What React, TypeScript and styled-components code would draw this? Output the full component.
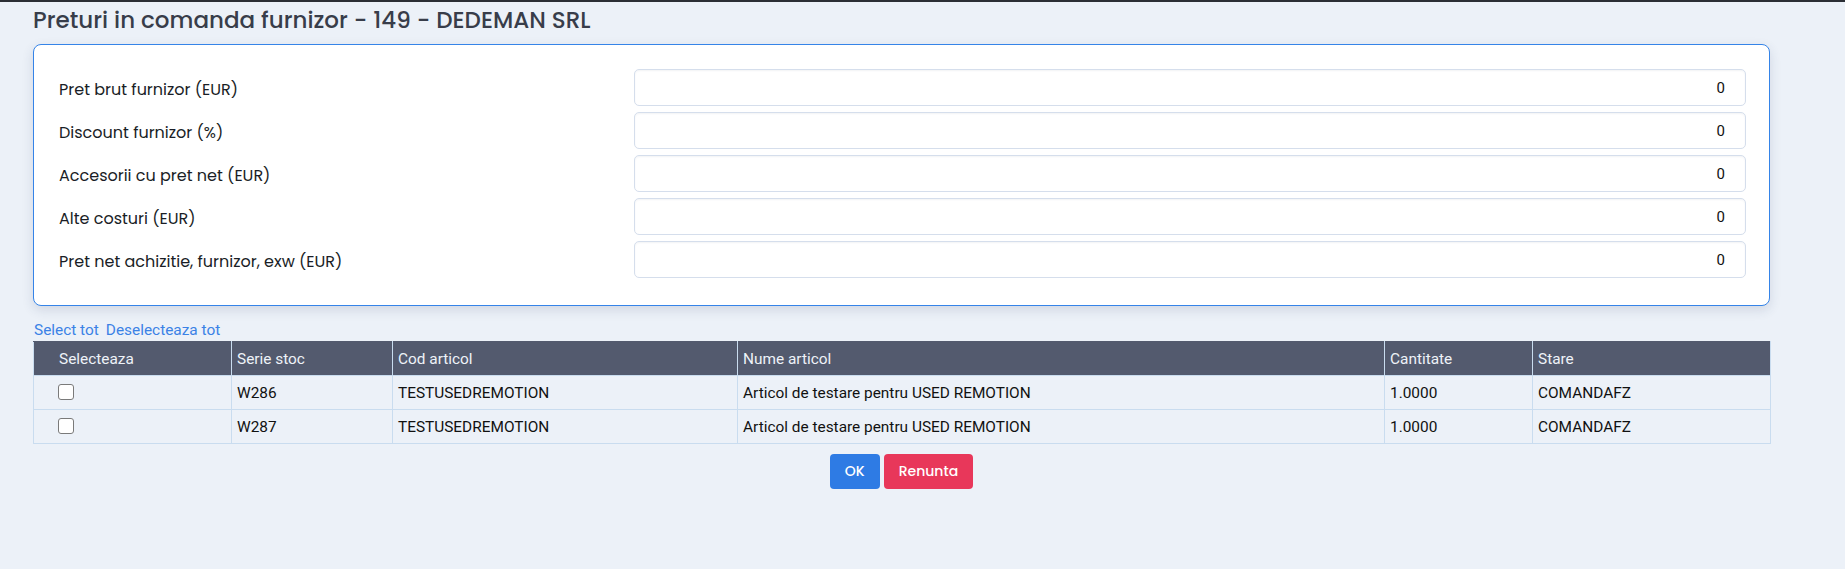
import React from "react";
import styled, { createGlobalStyle } from "styled-components";

const GlobalStyle = createGlobalStyle`
  html, body {
    margin: 0;
    padding: 0;
    background: #ecf1f8;
  }
  body {
    font-family: Roboto, "Liberation Sans", sans-serif;
  }
`;

const Page = styled.div`
  min-height: 567px;
  border-top: 2px solid #2b2e35;
  padding: 0 75px 0 33px;
`;

const Title = styled.h1`
  margin: 0;
  height: 42px;
  padding-top: 3px;
  box-sizing: border-box;
  font-family: Poppins, "Open Sans", sans-serif;
  font-weight: 500;
  font-size: 23px;
  line-height: 30px;
  color: #383d4a;
`;

const Card = styled.section`
  background: #ffffff;
  border: 1px solid #3584e8;
  border-radius: 8px;
  box-shadow: 0 4px 12px rgba(40, 60, 100, 0.14);
  padding: 24px 23px 27px 24px;
  display: grid;
  grid-template-columns: 576px 1fr;
  grid-auto-rows: 37px;
  row-gap: 6px;
  align-items: center;
`;

const Label = styled.label`
  font-family: Poppins, "Open Sans", sans-serif;
  font-size: 16px;
  color: #1a1e26;
  padding-left: 1px;
  padding-top: 3px;
`;

const NumberInput = styled.input`
  box-sizing: border-box;
  height: 37px;
  width: 100%;
  border: 1px solid #d5deec;
  border-radius: 5px;
  box-shadow: inset 0 1px 2px rgba(30, 50, 90, 0.06);
  padding: 0 20px 0 12px;
  text-align: right;
  font-family: Roboto, "Liberation Sans", sans-serif;
  font-size: 15px;
  color: #111;
  background: #fff;
  outline: none;
`;

const Links = styled.div`
  margin-top: 13px;
  display: flex;
  gap: 7px;
  font-size: 15.4px;
  line-height: 22px;
  padding-left: 1px;
`;

const LinkText = styled.a`
  color: #3b82e6;
  text-decoration: none;
  cursor: pointer;
`;

const Table = styled.table`
  width: 100%;
  border-collapse: collapse;
  table-layout: fixed;
  font-size: 15.4px;
  border: 1px solid #c9dcef;
`;

const HeadCell = styled.th<{ $first?: boolean }>`
  background: #535a6e;
  color: #eef2f8;
  font-weight: 400;
  text-align: left;
  height: 33px;
  padding: 0 0 0 ${(p) => (p.$first ? "25px" : "5px")};
  border: 1px solid #c9dcef;
  border-top-color: #535a6e;
`;

const Cell = styled.td<{ $first?: boolean }>`
  background: #ecf1f8;
  color: #111;
  height: 33px;
  padding: 0 0 0 ${(p) => (p.$first ? "24px" : "5px")};
  border: 1px solid #c9dcef;
`;

const Check = styled.input`
  appearance: none;
  margin: 0;
  width: 16px;
  height: 16px;
  border: 1px solid #7a7a7a;
  border-radius: 3px;
  background: #fff;
  display: block;
  transform: translateY(-1px);
`;

const Actions = styled.div`
  margin-top: 10px;
  display: flex;
  justify-content: center;
  gap: 4px;
`;

const Button = styled.button<{ $variant: "primary" | "danger" }>`
  height: 35px;
  padding: 0 15px;
  border: none;
  border-radius: 4px;
  font-family: Poppins, "Open Sans", sans-serif;
  font-weight: 500;
  font-size: 14px;
  color: #fff;
  background: ${(p) => (p.$variant === "primary" ? "#2e7be4" : "#e8375a")};
  cursor: pointer;
`;

const fields = [
  "Pret brut furnizor (EUR)",
  "Discount furnizor (%)",
  "Accesorii cu pret net (EUR)",
  "Alte costuri (EUR)",
  "Pret net achizitie, furnizor, exw (EUR)",
];

const columns = [
  { title: "Selecteaza", width: 198 },
  { title: "Serie stoc", width: 161 },
  { title: "Cod articol", width: 345 },
  { title: "Nume articol", width: 647 },
  { title: "Cantitate", width: 148 },
  { title: "Stare", width: 238 },
];

const rows = [
  { serie: "W286", cod: "TESTUSEDREMOTION", nume: "Articol de testare pentru USED REMOTION", cant: "1.0000", stare: "COMANDAFZ" },
  { serie: "W287", cod: "TESTUSEDREMOTION", nume: "Articol de testare pentru USED REMOTION", cant: "1.0000", stare: "COMANDAFZ" },
];

export default function App() {
  return (
    <>
      <GlobalStyle />
      <Page>
        <Title>Preturi in comanda furnizor - 149 - DEDEMAN SRL</Title>
        <Card>
          {fields.map((f) => (
            <React.Fragment key={f}>
              <Label>{f}</Label>
              <NumberInput type="text" defaultValue="0" />
            </React.Fragment>
          ))}
        </Card>
        <Links>
          <LinkText>Select tot</LinkText>
          <LinkText>Deselecteaza tot</LinkText>
        </Links>
        <Table>
          <colgroup>
            {columns.map((c) => (
              <col key={c.title} style={{ width: c.width }} />
            ))}
          </colgroup>
          <thead>
            <tr>
              {columns.map((c, i) => (
                <HeadCell key={c.title} $first={i === 0}>
                  {c.title}
                </HeadCell>
              ))}
            </tr>
          </thead>
          <tbody>
            {rows.map((r) => (
              <tr key={r.serie}>
                <Cell $first>
                  <Check type="checkbox" />
                </Cell>
                <Cell>{r.serie}</Cell>
                <Cell>{r.cod}</Cell>
                <Cell>{r.nume}</Cell>
                <Cell>{r.cant}</Cell>
                <Cell>{r.stare}</Cell>
              </tr>
            ))}
          </tbody>
        </Table>
        <Actions>
          <Button $variant="primary">OK</Button>
          <Button $variant="danger">Renunta</Button>
        </Actions>
      </Page>
    </>
  );
}
